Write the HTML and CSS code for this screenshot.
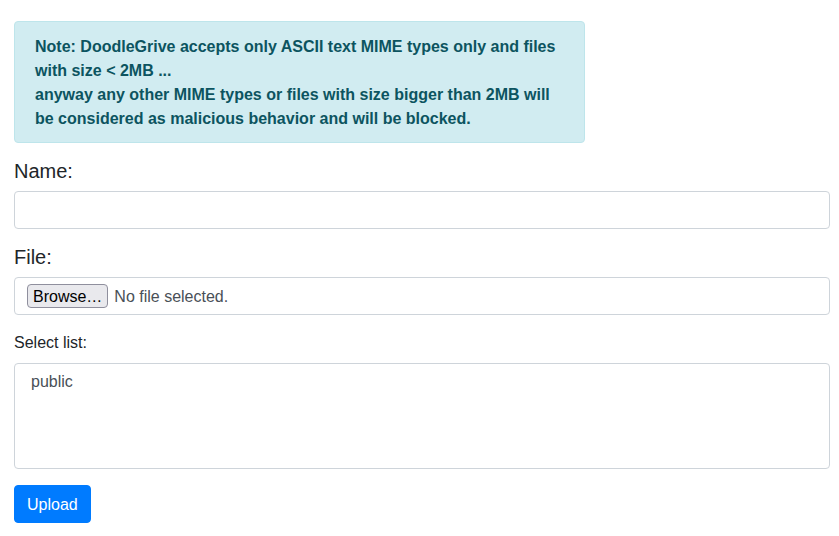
FILE: index.html
```html
<!DOCTYPE html>
<html>
<head>
<meta charset="utf-8">
<link rel="stylesheet" href="styles.css">
</head>
<body>
<div class="page">
  <div class="alert">Note: DoodleGrive accepts only ASCII text MIME types only and files with size &lt; 2MB ...<br>anyway any other MIME types or files with size bigger than 2MB will be considered as malicious behavior and will be blocked.</div>
  <form class="form">
    <div class="group">
      <label class="label-lg" for="name">Name:</label>
      <input class="control" id="name" type="text">
    </div>
    <div class="group">
      <label class="label-lg">File:</label>
      <div class="control file">
        <span class="browse">Browse…</span>
        <span class="nofile">No file selected.</span>
      </div>
    </div>
    <div class="group">
      <label class="label-sm" for="list">Select list:</label>
      <select class="control listbox" id="list" multiple>
        <option>public</option>
      </select>
    </div>
    <button type="button" class="btn">Upload</button>
  </form>
</div>
</body>
</html>
```
FILE: styles.css
```css
* { box-sizing: border-box; }
html, body { margin: 0; padding: 0; background: #fff; }
body {
  font-family: "Liberation Sans", Arial, sans-serif;
  font-size: 16px;
  line-height: 24px;
  color: #212529;
}
.page {
  padding: 21px 9px 0 14px;
}
.alert {
  width: 571px;
  padding: 13px 20px 11px;
  background: #d1ecf1;
  border: 1px solid #bee5eb;
  border-radius: 4px;
  color: #0c5460;
  font-weight: bold;
  margin-bottom: 16px;
}
.group { margin-bottom: 16px; display: flex; flex-direction: column; }
.label-lg {
  font-size: 20px;
  line-height: 24px;
  margin-bottom: 8px;
  color: #212529;
}
.label-sm {
  font-size: 16px;
  line-height: 24px;
  margin-bottom: 8px;
}
.control {
  display: block;
  width: 100%;
  height: 38px;
  padding: 6px 12px;
  font-family: inherit;
  font-size: 16px;
  line-height: 24px;
  color: #495057;
  background: #fff;
  border: 1px solid #ced4da;
  border-radius: 4px;
  outline: none;
}
.file {
  display: flex;
  align-items: center;
  gap: 6px;
  padding: 0 12px;
}
.browse {
  display: inline-block;
  height: 24px;
  line-height: 23px;
  padding: 0 5px;
  background: #e9e9ed;
  border: 1px solid #8f8f9d;
  border-radius: 4px;
  color: #000;
  font-size: 16px;
}
.nofile { color: #495057; padding-top: 1px; }
.listbox {
  height: 106px;
  padding: 9px 12px 6px;
  overflow: hidden;
}
.listbox option {
  padding: 0 4px;
  color: #495057;
  font-size: 16px;
  line-height: 21px;
}
.btn {
  display: inline-block;
  height: 38px;
  padding: 7px 12px 5px;
  font-family: inherit;
  font-size: 16px;
  line-height: 24px;
  color: #fff;
  background: #007bff;
  border: 1px solid #007bff;
  border-radius: 4px;
}
```
